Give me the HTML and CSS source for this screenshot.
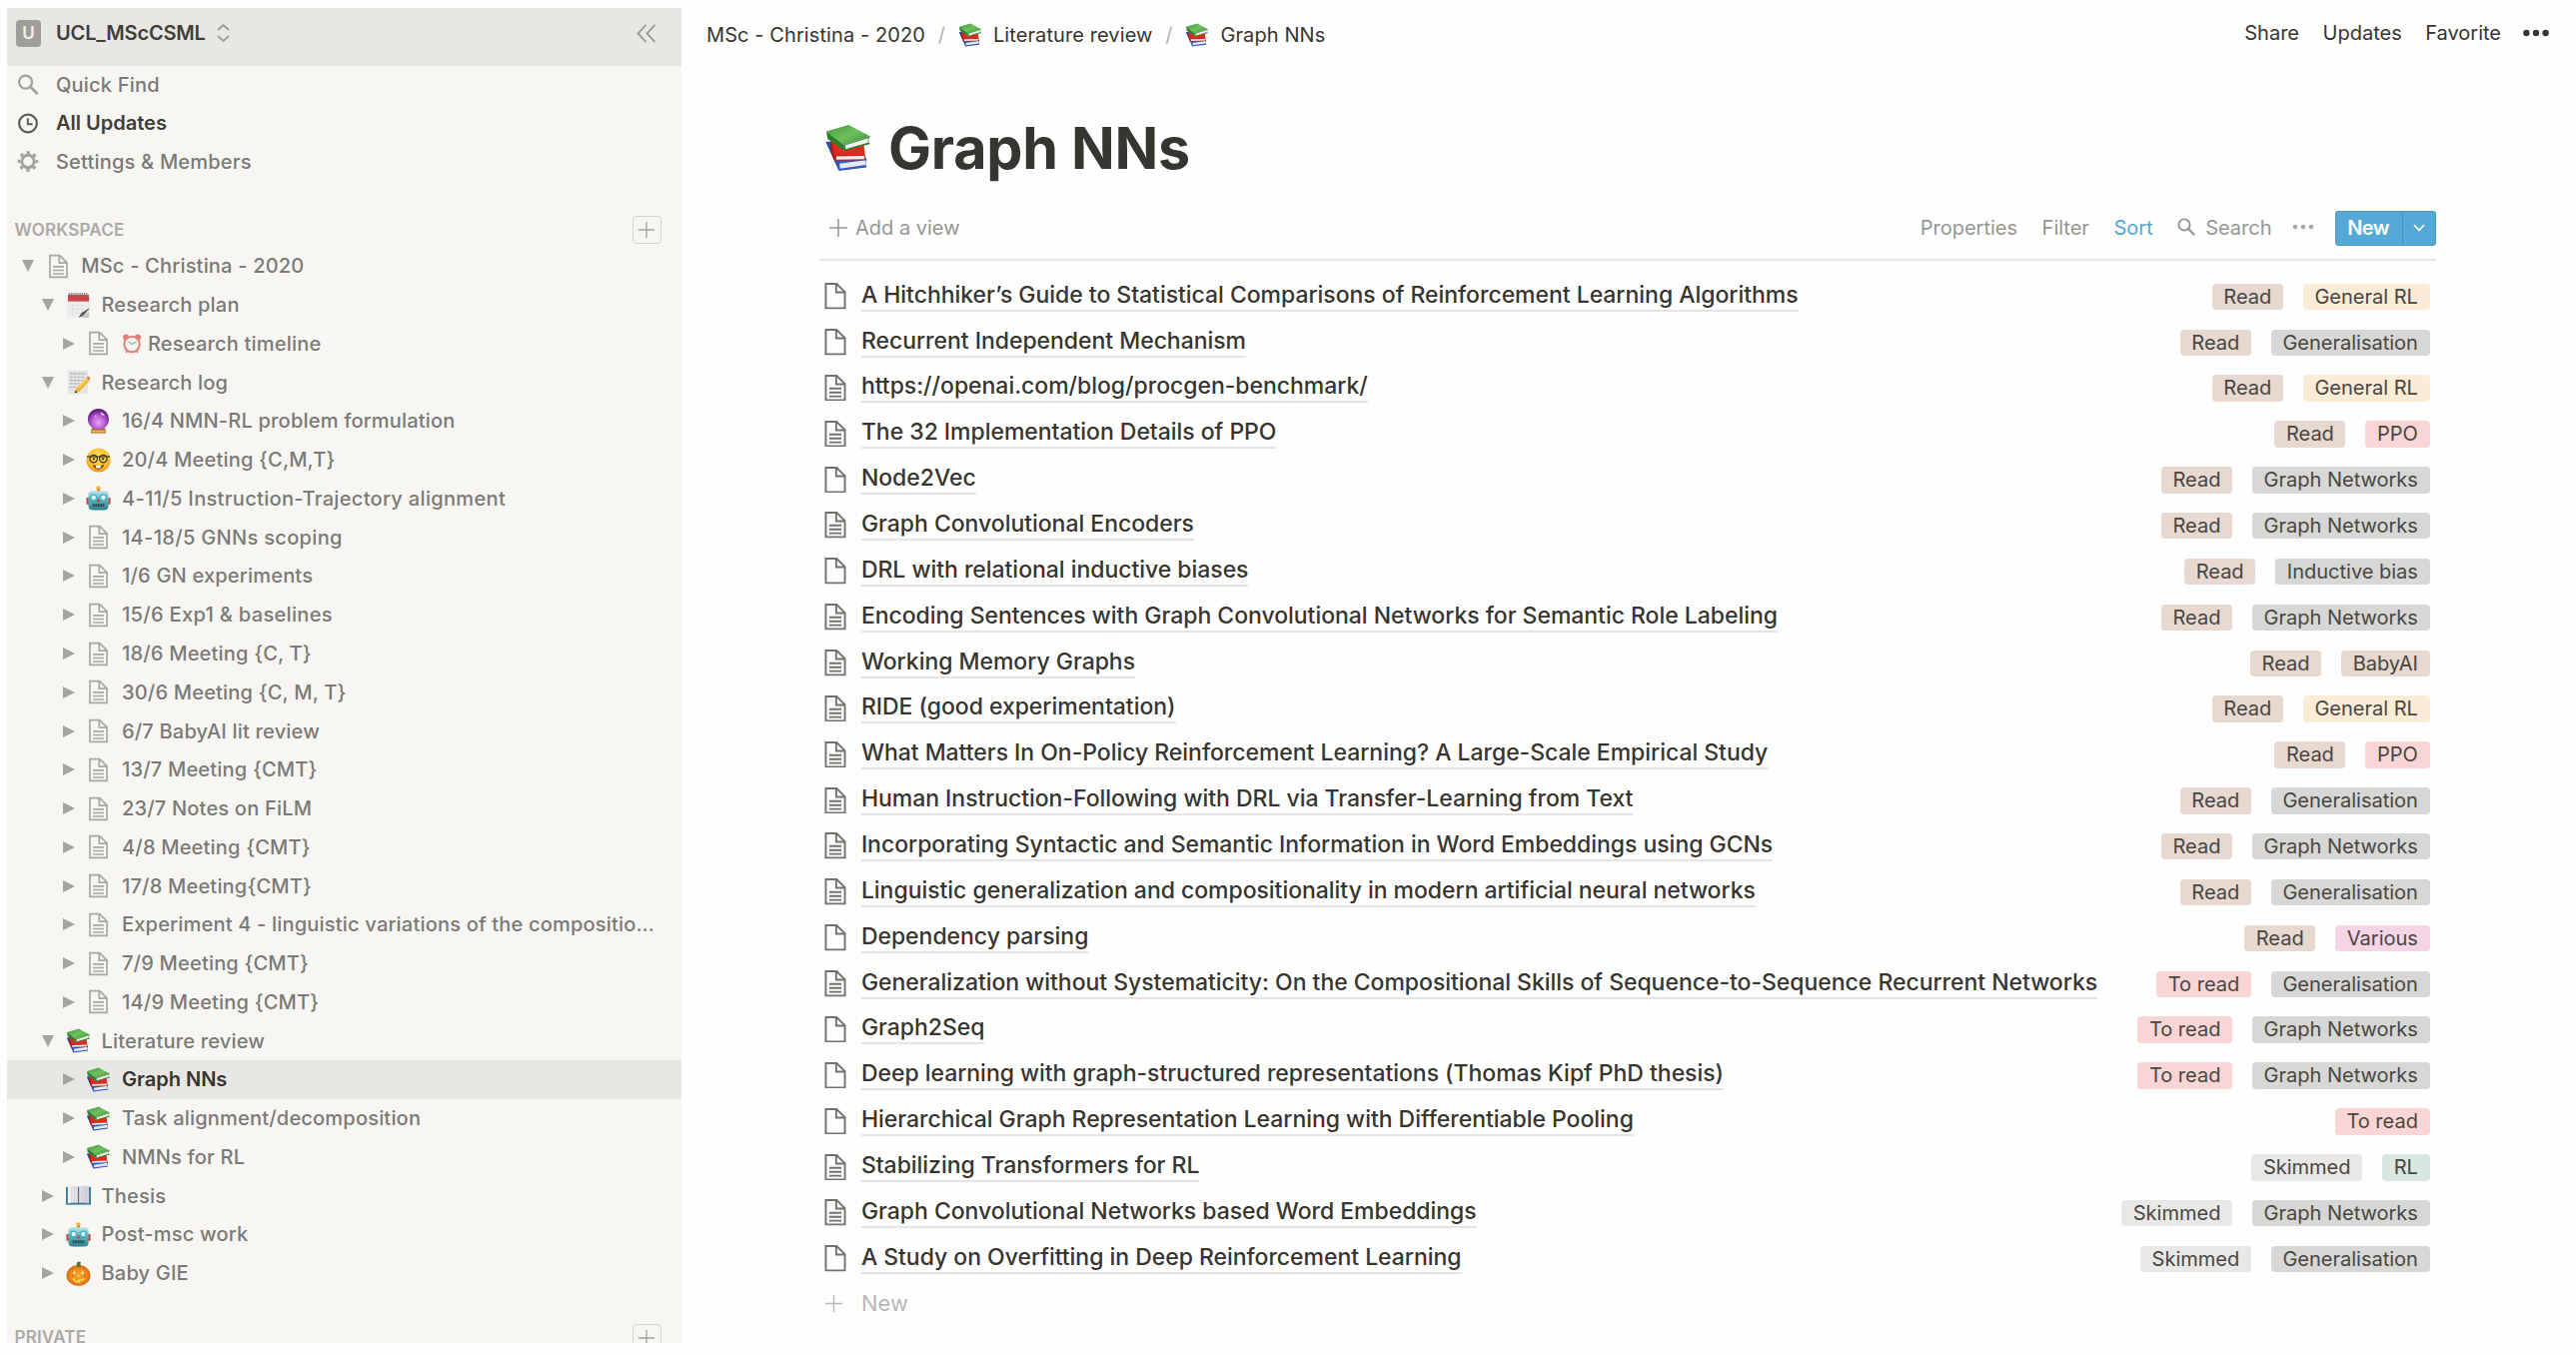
FILE: index.html
```html
<!DOCTYPE html>
<html lang="en">
<head>
<meta charset="utf-8">
<title>Graph NNs</title>
<link rel="stylesheet" href="styles.css">
</head>
<body>
<svg class="sprite" aria-hidden="true">
  <defs>
    <linearGradient id="g-green" x1="0" y1="0" x2="1" y2="1"><stop offset="0" stop-color="#3f9a3a"/><stop offset=".5" stop-color="#6fbf5c"/><stop offset="1" stop-color="#3c9138"/></linearGradient>
    <radialGradient id="g-ball" cx=".5" cy=".65" r=".6"><stop offset="0" stop-color="#e7a9f5"/><stop offset=".55" stop-color="#b457d2"/><stop offset="1" stop-color="#5b1b78"/></radialGradient>
    <radialGradient id="g-face" cx=".5" cy=".4" r=".6"><stop offset="0" stop-color="#ffe355"/><stop offset=".7" stop-color="#fbbf2f"/><stop offset="1" stop-color="#ee8f1e"/></radialGradient>
    <linearGradient id="g-robot" x1="0" y1="0" x2="0" y2="1"><stop offset="0" stop-color="#bfe3e6"/><stop offset=".45" stop-color="#63b1bb"/><stop offset="1" stop-color="#2b7f8c"/></linearGradient>
    <radialGradient id="g-pumpkin" cx=".5" cy=".5" r=".55"><stop offset="0" stop-color="#f9a43a"/><stop offset=".7" stop-color="#ee8222"/><stop offset="1" stop-color="#c9590f"/></radialGradient>
    <linearGradient id="g-page" x1="0" y1="0" x2="1" y2="0"><stop offset="0" stop-color="#f4f3f7"/><stop offset="1" stop-color="#cfcdd8"/></linearGradient>
  </defs>
  <symbol id="doc" viewBox="0 0 20 25"><path d="M1 1h10.2L19 8.6V24H1z M10.8 1v8H19" fill="none" stroke="currentColor" stroke-width="1.8"/></symbol>
  <symbol id="doc-text" viewBox="0 0 20 25"><path d="M1 1h10.2L19 8.6V24H1z M10.8 1v8H19 M4.2 13h11.6 M4.2 16.7h11.6 M4.2 20.4h11.6" fill="none" stroke="currentColor" stroke-width="1.8"/></symbol>
  <symbol id="right" viewBox="0 0 12 12"><path d="M0 0l12 6-12 6z" fill="currentColor"/></symbol>
  <symbol id="down" viewBox="0 0 12 12"><path d="M0 0h12L6 12z" fill="currentColor"/></symbol>
  <symbol id="plus" viewBox="0 0 18 18"><path d="M9 0v18M0 9h18" fill="none" stroke="currentColor" stroke-width="1.5"/></symbol>
  <symbol id="search" viewBox="0 0 22 22"><circle cx="8.5" cy="8.5" r="6.8" fill="none" stroke="currentColor" stroke-width="2.4"/><path d="M13.4 13.4l6.8 6.8" stroke="currentColor" stroke-width="2.8" stroke-linecap="round"/></symbol>
  <symbol id="books" viewBox="34 42 142 146">
    <path d="M36 97l20-2 20 60 4 29-5-1z" fill="#2c4aa8"/>
    <path d="M66 152l92-10 3 10-3 12 3 10-84 11z" fill="#3558c4"/>
    <path d="M78 163l80-11v15l-78 11z" fill="#e6e9f2"/>
    <path d="M52 92l40 30 60-18 4 34-94 16z" fill="#df2a20"/>
    <path d="M52 92l14 60-5-1-11-30z" fill="#a31a18"/>
    <path d="M64 137l92-1v16l-91 2z" fill="#c3241c"/>
    <path d="M68 141l86-2v10l-86 2z" fill="#f0eeee"/>
    <path d="M38 65l68-20 66 35-80 26z" fill="url(#g-green)"/>
    <path d="M38 65l54 41 1 18-51-36z" fill="#2f7d2c"/>
    <path d="M92 106l80-26-5 6v13l5 4-79 21z" fill="#2f7d2c"/>
    <path d="M96 107l69-22v14l-69 20z" fill="#f0f0f0"/>
  </symbol>
  <symbol id="calendar" viewBox="0 0 24 26"><path d="M1 2h22v24H1z" fill="#efefef"/><path d="M1 9v17M23 9v8M6 9v16M11 9v16M16 9v12M2 13h20M2 17h20M2 21h16" stroke="#dcdcdc" stroke-width=".7"/><path d="M1 2h22v7H1z" fill="#c6464a"/><path d="M2 1.5h20" stroke="#777" stroke-width="3" stroke-dasharray="1 1"/><path d="M23 17l-6 7-5 2 3-5 8-5z" fill="#555a61"/><path d="M23 19v7h-8z" fill="#c9c9c9"/></symbol>
  <symbol id="memo" viewBox="0 0 24 26"><path d="M1 1h21v24H1z" fill="#e4e4e4"/><path d="M3 4h17M3 7.5h16M3 11h14M3 14.500h10M3 18h6" stroke="#aeb0b4" stroke-width="1.2" stroke-dasharray="3 1"/><path d="M20.500 8l3.500 3-11 12-5 1.500 1.500-5z" fill="#f2b92d"/><path d="M12 18.500L21 9" stroke="#fbdc6e" stroke-width="1.300"/><path d="M20.500 8l1-1c1.500-.5 3 1 2.500 3l-1 1z" fill="#d9776d"/><path d="M8 24.500l1-3 2 2z" fill="#333"/></symbol>
  <symbol id="clock" viewBox="0 0 20 20"><circle cx="4" cy="3.500" r="3" fill="#e57b78"/><circle cx="16" cy="3.500" r="3" fill="#e57b78"/><path d="M4 19l2-3M16 19l-2-3" stroke="#e08a86" stroke-width="1.800"/><circle cx="10" cy="10.500" r="7.800" fill="#f5f3f0" stroke="#e0817d" stroke-width="1.900"/><path d="M6.500 7.500L10 10.500l4.500-2.500" fill="none" stroke="#8b8884" stroke-width="1"/></symbol>
  <symbol id="ball" viewBox="0 0 24 26"><path d="M5 20h14l1 5.500H4z" fill="#a9701f"/><path d="M5 23.500h14" stroke="#edc254" stroke-width="1.800"/><circle cx="12" cy="11" r="11" fill="url(#g-ball)"/><path d="M14 4c2 0 4 1.500 4.500 3.500l-3-1z" fill="#f5d6fb"/><circle cx="9" cy="8" r="1.500" fill="#d58aec"/></symbol>
  <symbol id="nerd" viewBox="0 0 26 26"><circle cx="13" cy="13" r="12.500" fill="url(#g-face)"/><path d="M7 17.500q6 2.500 12 0-1 5-6 5t-6-5z" fill="#8a4a14"/><path d="M10.500 18.600h5v2.600h-5z" fill="#fff"/><g fill="#f0c84b" stroke="#3b3420" stroke-width="1.300"><circle cx="8" cy="11.500" r="3.900"/><circle cx="18" cy="11.500" r="3.900"/></g><path d="M1 9.300h24" stroke="#3b3420" stroke-width="1.200"/><circle cx="8.200" cy="11.700" r="1.200" fill="#5c3a12"/><circle cx="17.800" cy="11.700" r="1.200" fill="#5c3a12"/></symbol>
  <symbol id="robot" viewBox="0 0 26 26"><path d="M11.500 2h3v4h-3z" fill="#a5533b"/><circle cx="13" cy="2.500" r="2.300" fill="#f2b632"/><path d="M0.500 12.500h3v7h-3zM22.500 12.500h3v7h-3z" fill="#c9463f"/><path d="M6 5.500h14q3.500 0 3.500 4v11.500q0 4.500-5 4.500h-11q-5 0-5-4.500V9.500q0-4 3.500-4z" fill="url(#g-robot)"/><g fill="#e6fbff" stroke="#3fb2cf" stroke-width="1.500"><circle cx="8" cy="12.500" r="3"/><circle cx="18" cy="12.500" r="3"/></g><path d="M13 13l2 4h-4z" fill="#d13c33"/><path d="M7 20.500h12" stroke="#2c4c52" stroke-width="2.800" stroke-dasharray="2 .6"/></symbol>
  <symbol id="openbook" viewBox="0 0 26 20"><path d="M0 1h26v18.500H0z" fill="#3c7f9f"/><path d="M2 0q6-1 10.500 1v16.500Q8 17 2 18zM24 0q-6-1-10.500 1v16.500Q18 17 24 18z" fill="url(#g-page)"/><path d="M13 1v17" stroke="#6d6a74" stroke-width="1.400"/><path d="M6 1v16M9 1v16M17 1v16M20 1v16" stroke="#c4c2cc" stroke-width=".7"/></symbol>
  <symbol id="pumpkin" viewBox="0 0 26 26"><ellipse cx="13" cy="15" rx="12.500" ry="10.800" fill="url(#g-pumpkin)"/><path d="M8.500 5.500q-4 9 0 19.500M17.500 5.500q4 9 0 19.500" fill="none" stroke="#d66a16" stroke-width=".9"/><path d="M11.500 6q-1-4 1-5.500l3 .5q-1 2 0 5z" fill="#4b7a24"/><path d="M8.500 9l2.200 4.500H6.300zM17.500 9l2.200 4.500h-4.400zM13 13.500l1.300 2.500h-2.600z" fill="#ffe14a"/><path d="M6 17.500q7 3.500 14 0-1.500 5-7 5t-7-5z" fill="#ffd53d"/><path d="M10 18.700h2v1.700h-2zM15 20.500h2v2h-2z" fill="#e37a1c"/></symbol>
</svg>

<aside class="sidebar">
  <header class="workspace">
    <span class="avatar">U</span>
    <span class="workspace-name">UCL_MScCSML</span>
    <svg class="switcher" viewBox="0 0 13 18"><path d="M1 6l5.500-5L12 6M1 12l5.500 5 5.500-5" fill="none" stroke="currentColor" stroke-width="1.800"/></svg>
    <svg class="collapse" viewBox="0 0 20 19"><path d="M9.500 .8L1.500 9.500l8 8.700M18.500 .8l-8 8.700 8 8.700" fill="none" stroke="currentColor" stroke-width="1.900"/></svg>
  </header>
  <nav class="links">
    <a class="link"><svg class="link-icon"><use href="#search"/></svg>Quick Find</a>
    <a class="link strong"><svg class="link-icon" viewBox="0 0 22 22"><circle cx="11" cy="11" r="9.300" fill="none" stroke="currentColor" stroke-width="2.300"/><path d="M10.800 5.500v6.300h5" fill="none" stroke="currentColor" stroke-width="2"/></svg>All Updates</a>
    <a class="link"><svg class="link-icon" viewBox="0 0 22 22"><circle cx="11" cy="11" r="6.500" fill="none" stroke="currentColor" stroke-width="3"/><circle cx="11" cy="11" r="9.300" fill="none" stroke="currentColor" stroke-width="3" stroke-dasharray="3.400 3.904" stroke-dashoffset="1.700"/></svg>Settings &amp; Members</a>
  </nav>
  <div class="section"><span>WORKSPACE</span><span class="add"><svg><use href="#plus"/></svg></span></div>
  <div class="tree">
    <div class="node"><svg class="arrow"><use href="#down"/></svg><span class="icon"><svg class="page"><use href="#doc-text"/></svg></span><span class="label">MSc - Christina - 2020</span></div>
    <div class="node d1"><svg class="arrow"><use href="#down"/></svg><span class="icon"><svg class="emoji"><use href="#calendar"/></svg></span><span class="label">Research plan</span></div>
    <div class="node d2"><svg class="arrow"><use href="#right"/></svg><span class="icon"><svg class="page"><use href="#doc-text"/></svg></span><span class="label"><svg class="inline-emoji"><use href="#clock"/></svg>Research timeline</span></div>
    <div class="node d1"><svg class="arrow"><use href="#down"/></svg><span class="icon"><svg class="emoji"><use href="#memo"/></svg></span><span class="label">Research log</span></div>
    <div class="node d2"><svg class="arrow"><use href="#right"/></svg><span class="icon"><svg class="emoji"><use href="#ball"/></svg></span><span class="label">16/4 NMN-RL problem formulation</span></div>
    <div class="node d2"><svg class="arrow"><use href="#right"/></svg><span class="icon"><svg class="emoji"><use href="#nerd"/></svg></span><span class="label">20/4 Meeting {C,M,T}</span></div>
    <div class="node d2"><svg class="arrow"><use href="#right"/></svg><span class="icon"><svg class="emoji"><use href="#robot"/></svg></span><span class="label wide">4-11/5 Instruction-Trajectory alignment</span></div>
    <div class="node d2"><svg class="arrow"><use href="#right"/></svg><span class="icon"><svg class="page"><use href="#doc-text"/></svg></span><span class="label wide">14-18/5 GNNs scoping</span></div>
    <div class="node d2"><svg class="arrow"><use href="#right"/></svg><span class="icon"><svg class="page"><use href="#doc-text"/></svg></span><span class="label">1/6 GN experiments</span></div>
    <div class="node d2"><svg class="arrow"><use href="#right"/></svg><span class="icon"><svg class="page"><use href="#doc-text"/></svg></span><span class="label wide">15/6 Exp1 &amp; baselines</span></div>
    <div class="node d2"><svg class="arrow"><use href="#right"/></svg><span class="icon"><svg class="page"><use href="#doc-text"/></svg></span><span class="label">18/6 Meeting {C, T}</span></div>
    <div class="node d2"><svg class="arrow"><use href="#right"/></svg><span class="icon"><svg class="page"><use href="#doc-text"/></svg></span><span class="label">30/6 Meeting {C, M, T}</span></div>
    <div class="node d2"><svg class="arrow"><use href="#right"/></svg><span class="icon"><svg class="page"><use href="#doc-text"/></svg></span><span class="label">6/7 BabyAI lit review</span></div>
    <div class="node d2"><svg class="arrow"><use href="#right"/></svg><span class="icon"><svg class="page"><use href="#doc-text"/></svg></span><span class="label">13/7 Meeting {CMT}</span></div>
    <div class="node d2"><svg class="arrow"><use href="#right"/></svg><span class="icon"><svg class="page"><use href="#doc-text"/></svg></span><span class="label">23/7 Notes on FiLM</span></div>
    <div class="node d2"><svg class="arrow"><use href="#right"/></svg><span class="icon"><svg class="page"><use href="#doc-text"/></svg></span><span class="label">4/8 Meeting {CMT}</span></div>
    <div class="node d2"><svg class="arrow"><use href="#right"/></svg><span class="icon"><svg class="page"><use href="#doc-text"/></svg></span><span class="label">17/8 Meeting{CMT}</span></div>
    <div class="node d2"><svg class="arrow"><use href="#right"/></svg><span class="icon"><svg class="page"><use href="#doc-text"/></svg></span><span class="label">Experiment 4 - linguistic variations of the compositio…</span></div>
    <div class="node d2"><svg class="arrow"><use href="#right"/></svg><span class="icon"><svg class="page"><use href="#doc-text"/></svg></span><span class="label">7/9 Meeting {CMT}</span></div>
    <div class="node d2"><svg class="arrow"><use href="#right"/></svg><span class="icon"><svg class="page"><use href="#doc-text"/></svg></span><span class="label">14/9 Meeting {CMT}</span></div>
    <div class="node d1"><svg class="arrow"><use href="#down"/></svg><span class="icon"><svg class="emoji"><use href="#books"/></svg></span><span class="label">Literature review</span></div>
    <div class="node d2 active"><svg class="arrow"><use href="#right"/></svg><span class="icon"><svg class="emoji"><use href="#books"/></svg></span><span class="label">Graph NNs</span></div>
    <div class="node d2"><svg class="arrow"><use href="#right"/></svg><span class="icon"><svg class="emoji"><use href="#books"/></svg></span><span class="label">Task alignment/decomposition</span></div>
    <div class="node d2"><svg class="arrow"><use href="#right"/></svg><span class="icon"><svg class="emoji"><use href="#books"/></svg></span><span class="label">NMNs for RL</span></div>
    <div class="node d1"><svg class="arrow"><use href="#right"/></svg><span class="icon"><svg class="emoji"><use href="#openbook"/></svg></span><span class="label">Thesis</span></div>
    <div class="node d1"><svg class="arrow"><use href="#right"/></svg><span class="icon"><svg class="emoji"><use href="#robot"/></svg></span><span class="label">Post-msc work</span></div>
    <div class="node d1"><svg class="arrow"><use href="#right"/></svg><span class="icon"><svg class="emoji"><use href="#pumpkin"/></svg></span><span class="label">Baby GIE</span></div>
  </div>
  <div class="section private"><span>PRIVATE</span><span class="add"><svg><use href="#plus"/></svg></span></div>
</aside>

<main class="main">
  <header class="topbar">
    <div class="crumbs">
      <span>MSc - Christina - 2020</span><i class="slash">/</i>
      <svg class="crumb-icon"><use href="#books"/></svg><span>Literature review</span><i class="slash">/</i>
      <svg class="crumb-icon"><use href="#books"/></svg><span>Graph NNs</span>
    </div>
    <div class="actions"><span>Share</span><span>Updates</span><span>Favorite</span>
      <svg class="more" viewBox="0 0 26 8"><g fill="currentColor"><circle cx="3.400" cy="4" r="3.200"/><circle cx="13" cy="4" r="3.200"/><circle cx="22.600" cy="4" r="3.200"/></g></svg>
    </div>
  </header>
  <h1 class="title"><svg class="title-icon"><use href="#books"/></svg>Graph NNs</h1>
  <div class="toolbar">
    <span class="add-view"><svg><use href="#plus"/></svg>Add a view</span>
    <span class="tool">Properties</span><span class="tool">Filter</span><span class="tool sort">Sort</span>
    <span class="tool find"><svg><use href="#search"/></svg>Search</span>
    <svg class="dots" viewBox="0 0 22 6"><g fill="currentColor"><circle cx="3" cy="3" r="2.300"/><circle cx="11" cy="3" r="2.300"/><circle cx="19" cy="3" r="2.300"/></g></svg>
    <span class="new"><b>New</b><span class="caret"><svg viewBox="0 0 12 8"><path d="M1 1l5 5.500L11 1" fill="none" stroke="currentColor" stroke-width="1.800"/></svg></span></span>
  </div>
  <div class="list">
    <div class="row"><svg class="doc"><use href="#doc"/></svg><a class="name">A Hitchhiker’s Guide to Statistical Comparisons of Reinforcement Learning Algorithms</a><span class="tag brown">Read</span><span class="tag yellow">General RL</span></div>
    <div class="row"><svg class="doc"><use href="#doc"/></svg><a class="name">Recurrent Independent Mechanism</a><span class="tag brown">Read</span><span class="tag gray">Generalisation</span></div>
    <div class="row"><svg class="doc"><use href="#doc-text"/></svg><a class="name">https://openai.com/blog/procgen-benchmark/</a><span class="tag brown">Read</span><span class="tag yellow">General RL</span></div>
    <div class="row"><svg class="doc"><use href="#doc-text"/></svg><a class="name">The 32 Implementation Details of PPO</a><span class="tag brown">Read</span><span class="tag red">PPO</span></div>
    <div class="row"><svg class="doc"><use href="#doc"/></svg><a class="name">Node2Vec</a><span class="tag brown">Read</span><span class="tag gray">Graph Networks</span></div>
    <div class="row"><svg class="doc"><use href="#doc-text"/></svg><a class="name">Graph Convolutional Encoders</a><span class="tag brown">Read</span><span class="tag gray">Graph Networks</span></div>
    <div class="row"><svg class="doc"><use href="#doc"/></svg><a class="name">DRL with relational inductive biases</a><span class="tag brown">Read</span><span class="tag gray">Inductive bias</span></div>
    <div class="row"><svg class="doc"><use href="#doc-text"/></svg><a class="name">Encoding Sentences with Graph Convolutional Networks for Semantic Role Labeling</a><span class="tag brown">Read</span><span class="tag gray">Graph Networks</span></div>
    <div class="row"><svg class="doc"><use href="#doc-text"/></svg><a class="name">Working Memory Graphs</a><span class="tag brown">Read</span><span class="tag brown">BabyAI</span></div>
    <div class="row"><svg class="doc"><use href="#doc-text"/></svg><a class="name">RIDE (good experimentation)</a><span class="tag brown">Read</span><span class="tag yellow">General RL</span></div>
    <div class="row"><svg class="doc"><use href="#doc-text"/></svg><a class="name">What Matters In On-Policy Reinforcement Learning? A Large-Scale Empirical Study</a><span class="tag brown">Read</span><span class="tag red">PPO</span></div>
    <div class="row"><svg class="doc"><use href="#doc-text"/></svg><a class="name">Human Instruction-Following with DRL via Transfer-Learning from Text</a><span class="tag brown">Read</span><span class="tag gray">Generalisation</span></div>
    <div class="row"><svg class="doc"><use href="#doc-text"/></svg><a class="name">Incorporating Syntactic and Semantic Information in Word Embeddings using GCNs</a><span class="tag brown">Read</span><span class="tag gray">Graph Networks</span></div>
    <div class="row"><svg class="doc"><use href="#doc-text"/></svg><a class="name">Linguistic generalization and compositionality in modern artificial neural networks</a><span class="tag brown">Read</span><span class="tag gray">Generalisation</span></div>
    <div class="row"><svg class="doc"><use href="#doc"/></svg><a class="name">Dependency parsing</a><span class="tag brown">Read</span><span class="tag pink">Various</span></div>
    <div class="row"><svg class="doc"><use href="#doc-text"/></svg><a class="name">Generalization without Systematicity: On the Compositional Skills of Sequence-to-Sequence Recurrent Networks</a><span class="tag red">To read</span><span class="tag gray">Generalisation</span></div>
    <div class="row"><svg class="doc"><use href="#doc"/></svg><a class="name">Graph2Seq</a><span class="tag red">To read</span><span class="tag gray">Graph Networks</span></div>
    <div class="row"><svg class="doc"><use href="#doc"/></svg><a class="name">Deep learning with graph-structured representations (Thomas Kipf PhD thesis)</a><span class="tag red">To read</span><span class="tag gray">Graph Networks</span></div>
    <div class="row"><svg class="doc"><use href="#doc"/></svg><a class="name">Hierarchical Graph Representation Learning with Differentiable Pooling</a><span class="tag red">To read</span></div>
    <div class="row"><svg class="doc"><use href="#doc-text"/></svg><a class="name">Stabilizing Transformers for RL</a><span class="tag light">Skimmed</span><span class="tag green">RL</span></div>
    <div class="row"><svg class="doc"><use href="#doc-text"/></svg><a class="name">Graph Convolutional Networks based Word Embeddings</a><span class="tag light">Skimmed</span><span class="tag gray">Graph Networks</span></div>
    <div class="row"><svg class="doc"><use href="#doc"/></svg><a class="name">A Study on Overfitting in Deep Reinforcement Learning</a><span class="tag light">Skimmed</span><span class="tag gray">Generalisation</span></div>
    <div class="row-new"><svg><use href="#plus"/></svg>New</div>
  </div>
</main>
</body>
</html>
```
FILE: styles.css
```css
* { box-sizing: border-box; }

body {
  margin: 0;
  width: 2578px;
  height: 1356px;
  padding: 8px 0 12px 7px;
  display: flex;
  overflow: hidden;
  background: #fefefe;
  color: #37352f;
  font: 400 20px/1.2 Inter, "Liberation Sans", sans-serif;
  white-space: nowrap;
}

svg { display: block; flex: none; }
.sprite { position: absolute; width: 0; height: 0; }

/* Sidebar */
.sidebar {
  width: 674.500px;
  flex: none;
  height: 1336px;
  overflow: hidden;
  background: #f7f6f3;
  color: #7b7a76;
  font-weight: 500;
  letter-spacing: 0.2px;
}

.workspace {
  height: 57.500px;
  padding: 0 25px 7px 9px;
  display: flex;
  align-items: center;
  background: #e8e7e4;
  color: #9d9c98;
}
.avatar {
  width: 25px;
  height: 27px;
  margin-right: 15px;
  border-radius: 4px;
  background: #9f9e9a;
  color: #f1f0ee;
  font-size: 17px;
  font-weight: 600;
  line-height: 27px;
  text-align: center;
}
.workspace-name { color: #403e39; font-weight: 600; letter-spacing: -0.150px; margin-right: 11.500px; }
.switcher { width: 13px; height: 18px; }
.collapse { width: 20px; height: 19px; margin-left: auto; }

.link {
  height: 38.600px;
  padding-left: 10px;
  display: flex;
  align-items: center;
  gap: 17px;
}
.link-icon { width: 22px; height: 21px; color: #a3a29e; }
.strong { color: #403e39; font-weight: 600; letter-spacing: 0; }
.strong .link-icon { color: #5c5a55; }

.section {
  height: 33px;
  margin-top: 32px;
  padding: 0 20px 0 7.500px;
  display: flex;
  align-items: center;
  justify-content: space-between;
  color: #abaaa6;
  font-size: 17px;
  font-weight: 600;
}
.private { margin-top: 28.500px; }
.add {
  width: 29px;
  height: 28px;
  display: grid;
  place-items: center;
  border: 1.500px solid #d5d4d1;
  border-radius: 4px;
  color: #a3a29e;
}
.add svg { width: 16px; height: 16px; }

.tree { padding-top: 0.700px; }
.node {
  height: 38.770px;
  padding-left: 15px;
  display: flex;
  align-items: center;
}
.d1 { padding-left: 35.200px; }
.d2 { padding-left: 55.700px; }
.arrow { width: 12px; height: 12px; color: #a5a4a0; }
.icon { width: 47.300px; padding-left: 1.300px; display: grid; place-items: center; }
.page { width: 19px; height: 25px; color: #a9a8a4; }
.emoji { width: 25px; height: 25px; }
.label { display: flex; align-items: center; }
.wide { letter-spacing: 0.330px; }
.inline-emoji { width: 20px; height: 20px; margin-right: 6px; }
.active { background: #e8e7e4; color: #37352f; font-weight: 600; letter-spacing: 0; }

/* Main column */
.main { flex: 1; min-width: 0; display: flex; flex-direction: column; }

.topbar {
  height: 52px;
  padding: 0 27px 0 25.500px;
  display: flex;
  justify-content: space-between;
  align-items: center;
}
.crumbs { display: flex; align-items: center; padding-top: 1px; letter-spacing: 0.090px; }
.slash { width: 33px; text-align: center; font-style: normal; color: #b5b4b1; }
.crumb-icon { width: 24px; height: 24px; margin-right: 11px; }
.actions { display: flex; align-items: center; gap: 23.500px; padding-bottom: 2px; }
.more { width: 26px; height: 8px; margin-left: -1.500px; }

.title {
  height: 70px;
  margin: 53px 0 0;
  padding-left: 143.500px;
  display: flex;
  align-items: center;
  font-size: 57.400px;
  font-weight: 700;
  letter-spacing: -0.250px;
}
.title-icon { width: 48px; height: 48px; margin-right: 16px; }

.toolbar {
  width: 1618px;
  height: 62.500px;
  margin: 15px 0 0 138px;
  display: flex;
  align-items: center;
  border-bottom: 2px solid #e6e6e5;
  color: #979693;
}
.add-view { display: flex; align-items: center; gap: 8.500px; padding-left: 10px; margin-right: auto; }
.add-view svg { width: 18px; height: 18px; margin-bottom: 1px; }
.tool { margin-right: 24.500px; }
.sort { color: #4ba8d9; }
.find { display: flex; align-items: center; gap: 10px; margin-right: 20.500px; }
.find svg { width: 18px; height: 18px; margin-bottom: 2px; }
.dots { width: 22px; height: 6px; margin: 0 20.500px 2px 0; color: #a9a8a5; }
.new {
  width: 101px;
  height: 35px;
  display: flex;
  align-items: center;
  overflow: hidden;
  border-radius: 4px;
  background: #54a9d7;
  box-shadow: inset 0 0 0 1px #4a9dca;
  color: #fff;
}
.new b { width: 67px; text-align: center; font-weight: 600; letter-spacing: -0.600px; }
.caret { flex: 1; height: 100%; display: grid; place-items: center; border-left: 1px solid #4593bd; }
.caret svg { width: 12px; height: 8px; }

.list { margin: 13px 0 0 138px; width: 1618px; }
.row {
  height: 45.870px;
  padding: 0 6px 0 5.900px;
  display: flex;
  align-items: center;
  gap: 20px;
}
.doc { width: 22px; height: 26.500px; margin-right: -5.500px; color: #73716c; }
.name {
  margin: 0 auto 1.500px 0;
  border-bottom: 2px solid #e4e4e2;
  font-size: 23px;
  font-weight: 500;
  line-height: 30px;
  letter-spacing: -0.035px;
}
.tag {
  height: 26.500px;
  margin-top: 1px;
  padding: 0 11.600px;
  border-radius: 4px;
  line-height: 27.500px;
  color: #484640;
}
.brown { background: #e7d8d0; }
.yellow { background: #faecd7; }
.gray { background: #d7d7d5; }
.light { background: #e8e8e7; }
.red { background: #f9d6d5; }
.pink { background: #f5d4e6; }
.green { background: #d9e7e1; }

.row-new {
  height: 44.500px;
  padding-left: 6px;
  display: flex;
  align-items: center;
  gap: 19.500px;
  color: #b9b8b5;
  font-size: 22px;
}
.row-new svg { width: 17px; height: 17px; }
```
